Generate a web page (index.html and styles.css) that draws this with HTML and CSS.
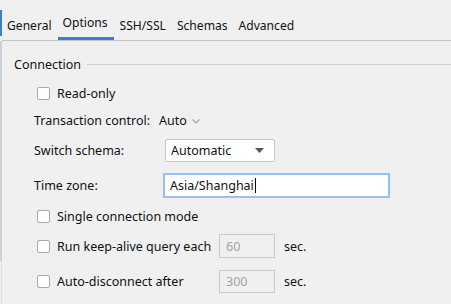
FILE: index.html
```html
<!DOCTYPE html>
<html>
<head>
<meta charset="utf-8">
<link rel="stylesheet" href="styles.css">
</head>
<body>
<div class="frame">
  <div class="edge"><div class="edge-blue"></div><div class="edge-gray"></div><div class="edge-light"></div></div>
  <div class="main">
    <div class="tabs">
      <div class="tab">General</div>
      <div class="tab active">Options</div>
      <div class="tab">SSH/SSL</div>
      <div class="tab">Schemas</div>
      <div class="tab">Advanced</div>
    </div>
    <div class="content">
      <div class="section"><span class="section-title">Connection</span><span class="section-line"></span></div>
      <div class="row row-check r1"><span class="check"></span><span>Read-only</span></div>
      <div class="row r2"><span class="label label-tx">Transaction control:</span><span class="auto">Auto<svg class="chev" width="8" height="5" viewBox="0 0 8 5"><path d="M0.5 0.5 L4 4 L7.5 0.5" fill="none" stroke="#a0a0a0" stroke-width="1.1"/></svg></span></div>
      <div class="row r3"><span class="label label-w">Switch schema:</span><span class="select">Automatic<svg class="tri" width="9" height="5" viewBox="0 0 9 5"><path d="M0 0 H9 L4.5 5 Z" fill="#555"/></svg></span></div>
      <div class="row r4"><span class="label label-w2">Time zone:</span><span class="input focus">Asia/Shanghai<span class="caret"></span></span></div>
      <div class="row row-check r5"><span class="check"></span><span>Single connection mode</span></div>
      <div class="row row-check r6"><span class="check"></span><span class="check-label">Run keep-alive query each</span><span class="num">60</span><span class="sec">sec.</span></div>
      <div class="row row-check r7"><span class="check"></span><span class="check-label">Auto-disconnect after</span><span class="num">300</span><span class="sec">sec.</span></div>
    </div>
  </div>
</div>
</body>
</html>
```
FILE: styles.css
```css
html, body {
  margin: 0;
  padding: 0;
  background: #f0f0f0;
}
body {
  font-family: "Noto Sans", "Liberation Sans", sans-serif;
  font-size: 12px;
  color: #111;
  width: 451px;
  height: 304px;
  overflow: hidden;
}
.frame {
  display: flex;
  height: 304px;
}
.edge {
  width: 2px;
  display: flex;
  flex-direction: column;
}
.edge-blue {
  margin-top: 10px;
  height: 26px;
  width: 2px;
  background: #3b7fd0;
}
.edge-gray {
  margin-top: 5px;
  height: 220px;
  width: 2px;
  background: #cdd0d6;
}
.edge-light {
  flex: 1;
  width: 1px;
  margin-left: 1px;
  background: #dde0e6;
}
.main {
  flex: 1;
  display: flex;
  flex-direction: column;
}
.tabs {
  display: flex;
  height: 40px;
  border-bottom: 1px solid #c4c4c4;
}
.tab {
  padding: 0 5px;
  margin-right: 1px;
  display: flex;
  align-items: center;
  height: 40px;
  box-sizing: border-box;
  padding-top: 11px;
  font-size: 12.1px;
}
.tab.active {
  border-bottom: 3px solid #3c7fd1;
  padding-top: 8px;
  padding-right: 6px;
}
.content {
  display: flex;
  flex-direction: column;
  padding-left: 12px;
}
.section {
  display: flex;
  align-items: center;
  height: 16px;
  margin-top: 15px;
}
.section-title {
  font-size: 12.5px;
}
.section-line {
  flex: 1;
  height: 1px;
  background: #cbcbcb;
  margin-left: 6px;
}
.row {
  display: flex;
  align-items: center;
  font-size: 12.5px;
}
.row-check {
  padding-left: 23px;
}
.r1 { margin-top: 11px; height: 20px; }
.r2 { margin-top: 7px; height: 20px; padding-left: 20px; }
.r3 { margin-top: 9px; height: 23px; padding-left: 20px; }
.r4 { margin-top: 11px; height: 25px; padding-left: 20px; }
.r5 { margin-top: 8px; height: 20px; }
.r6 { margin-top: 8px; height: 24px; }
.r7 { margin-top: 12px; height: 23px; }
.check {
  width: 11px;
  height: 11px;
  border: 1px solid #a9a9a9;
  border-radius: 2px;
  background: #fff;
  margin-right: 7px;
  flex: none;
}
.label-tx { width: 125px; }
.label-w { width: 131px; }
.label-w2 { width: 129px; }
.auto {
  display: flex;
  align-items: center;
}
.chev {
  margin-left: 5px;
  margin-top: 2px;
}
.select {
  width: 110px;
  height: 23px;
  box-sizing: border-box;
  background: #fff;
  border: 1px solid #c6c6c6;
  border-radius: 2px;
  display: flex;
  align-items: center;
  justify-content: space-between;
  padding: 0 10px 0 5px;
}
.input {
  width: 227px;
  height: 25px;
  box-sizing: border-box;
  background: #fff;
  display: flex;
  align-items: center;
  padding-left: 5px;
}
.input.focus {
  border: 2px solid #94c1ee;
  border-radius: 1px;
}
.caret {
  width: 1px;
  height: 15px;
  background: #000;
  margin-left: 1px;
}
.check-label {
  width: 162px;
}
.num {
  width: 56px;
  height: 100%;
  box-sizing: border-box;
  border: 1px solid #c9c9c9;
  color: #a3a3a3;
  display: flex;
  align-items: center;
  padding-left: 6px;
}
.sec {
  margin-left: 9px;
}
```
